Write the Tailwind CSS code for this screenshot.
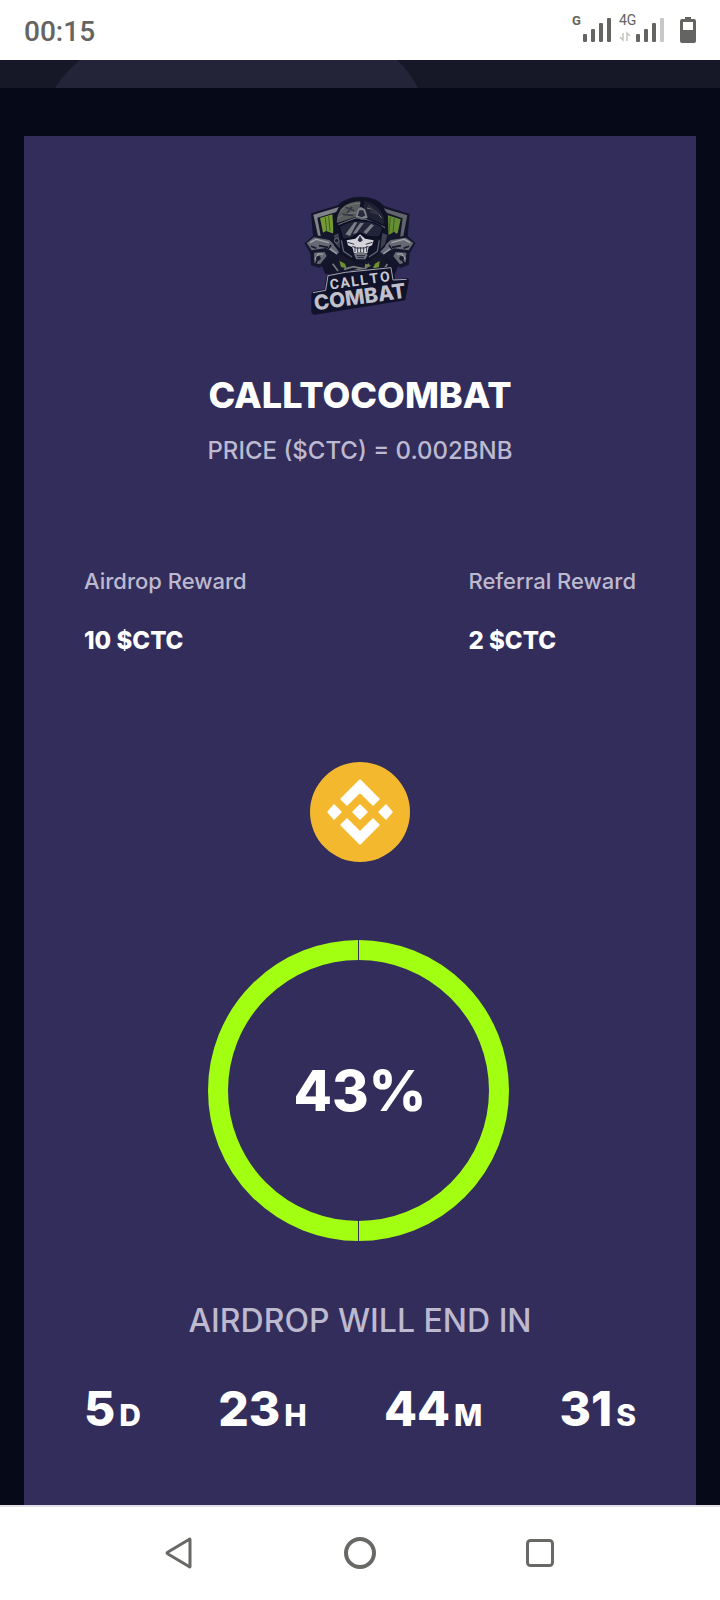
<!DOCTYPE html>
<html lang="en">
<head>
    <meta charset="UTF-8">
    <meta name="viewport" content="width=device-width, initial-scale=1">
    <title>CallToCombat Airdrop</title>
    <script src="https://cdn.jsdelivr.net/npm/@tailwindcss/browser@4"></script>
</head>
<body class="min-h-screen flex flex-col bg-[#060917] font-['Inter',sans-serif] text-white">
    <!-- Status bar -->
    <header class="h-[60px] shrink-0 bg-white text-[#646460] flex items-center justify-between px-6">
        <span class="pt-1 font-['Roboto',sans-serif] text-[28px] font-medium leading-8">00:15</span>
        <svg class="w-[124px] h-10" viewBox="0 -4 124 40" fill="currentColor" aria-hidden="true">
            <g font-family="Roboto, sans-serif">
                <text x="0" y="11" font-size="13" font-weight="700">G</text>
                <text x="47" y="11" font-size="14">4G</text>
            </g>
            <rect x="11" y="20" width="4" height="8" rx="1"/>
            <rect x="19" y="15" width="4" height="13" rx="1"/>
            <rect x="27" y="9" width="4" height="19" rx="1"/>
            <rect x="35" y="4" width="4" height="24" rx="1"/>
            <path d="M51 19v7l-3-3M55 27v-8l3 3" fill="none" stroke="#c4c4c2" stroke-width="1.5"/>
            <rect x="64" y="20" width="4" height="8" rx="1"/>
            <rect x="72" y="15" width="4" height="13" rx="1"/>
            <rect x="80" y="9" width="4" height="19" rx="1"/>
            <rect x="88" y="4" width="4" height="24" rx="1" fill="#c8c8c6"/>
            <path fill-rule="evenodd" d="M113 3h6v2h3q2 0 2 2v20q0 2-2 2h-12q-2 0-2-2V7q0-2 2-2h3zM111 8v8h10V8z"/>
        </svg>
    </header>

    <main class="flex-1 flex flex-col">
        <div class="h-7 bg-[#171827] overflow-hidden">
            <svg class="w-full h-full" viewBox="0 0 720 28" preserveAspectRatio="none" aria-hidden="true">
                <path d="M55 28Q65 12 80 0H397Q410 12 418 28z" fill="#232438"/>
            </svg>
        </div>

        <section class="mx-6 mt-12 flex-1 bg-[#332d5c] px-[60px] pt-12 pb-[68px] flex flex-col items-center">
            <!-- Project logo -->
            <svg class="w-[130px] h-[140px]" viewBox="0 0 390 420" role="img" aria-label="Call to Combat logo">
                <!-- shield -->
                <path d="M48 88L128 64Q150 38 197 38Q244 38 268 66L344 90L336 180L300 270H90L56 178z" fill="#14142b"/>
                <path d="M55 92L132 69L124 84L67 101L79 166L70 160z" fill="#81838a"/>
                <path d="M337 94L266 73L275 86L323 103L315 163L325 155z" fill="#62656c"/>
                <path d="M75 102L112 91L116 149L94 141L84 146z" fill="#739b32"/>
                <path d="M279 94L317 106L308 148L280 154z" fill="#658d31"/>
                <path d="M91 100l4 42M101 97l4 44M286 98l-4 48M298 102l-4 47" stroke="#405c27" stroke-width="3"/>
                <!-- rifles -->
                <path d="M28 178L56 154L80 156L91 142L111 153L119 172L151 196L148 255L128 252L118 224L95 228L75 252L48 244L46 208z" fill="#15172c"/>
                <path d="M362 178L337 155L310 158L298 143L279 154L269 174L239 197L241 255L262 252L271 225L296 229L315 253L342 242L344 207z" fill="#15172c"/>
                <path d="M35 177L57 160L103 168L137 201L125 211L93 192L50 199zM57 206L89 204L95 216L75 241L58 237z" fill="#666873"/>
                <path d="M355 177L333 161L287 168L252 201L264 210L297 193L341 199zM334 206L302 204L295 217L315 241L332 234z" fill="#666873"/>
                <path d="M45 176l18-10 39 10M99 190l27 20M60 226l10-17 14 2M345 176l-18-10-38 10M292 190l-27 20M331 226l-11-17-14 2" fill="none" stroke="#a2a4a9" stroke-width="4"/>
                <path d="M72 185l27 5M318 185l-27 5M62 238l12-20M328 238l-12-20M81 155l17 8M308 156l-15 8M48 187l16 6M342 187l-16 6M108 183l-8 12M282 183l8 12" stroke="#17182c" stroke-width="5"/>
                <circle cx="70" cy="223" r="7" fill="#1a1b30"/><circle cx="320" cy="223" r="7" fill="#1a1b30"/>
                <!-- torso -->
                <path d="M133 214L158 220L182 239H207L233 220L260 216L279 276L242 295H150L122 275z" fill="#171829"/>
                <path d="M133 230l17 9 5 14-17-4zM254 230l-14 9-7 15 19-5zM211 239l18 6-21 9z" fill="#6d9130"/>
                <path d="M147 256l28-8 35 7 12-16M159 265l36-10 33 7M113 239l16 22M277 240l-14 22" fill="none" stroke="#777981" stroke-width="5"/>
                <!-- helmet -->
                <path d="M114 150L121 91Q143 44 198 43Q253 45 274 88L280 152L270 188L247 212L226 231H174L137 211L116 182z" fill="#101226"/>
                <path d="M125 116Q126 62 181 53L196 52L194 77L182 98L133 115z" fill="#5b5d5c"/>
                <path d="M207 51Q258 62 268 107L266 122L216 98L206 79z" fill="#202132"/>
                <path d="M136 82Q157 58 196 58M128 103Q150 86 184 86M216 72q27 4 44 30" fill="none" stroke="#777977" stroke-width="3"/>
                <path d="M151 70l27 10M142 91l33 3M156 88l15-20M219 65l28 22M225 83l28 8" stroke="#353747" stroke-width="5"/>
                <path d="M189 75L198 69L210 76L218 101L200 107L182 99z" fill="#85868d"/>
                <path d="M193 79h12l6 16-11 5-12-5z" fill="#292a3e"/>
                <path d="M130 122L184 101L213 106L270 131" fill="none" stroke="#5f626b" stroke-width="4"/>
                <!-- visor -->
                <path d="M132 127Q164 108 199 110Q241 111 264 133L254 158Q228 163 207 153L195 147L181 155Q158 169 143 164z" fill="#22243a" stroke="#0a0c20" stroke-width="4"/>
                <path d="M151 151L178 115H187L165 156zM173 149L195 117H207L184 148zM205 145L228 120L237 124L214 150z" fill="#7a7b83"/>
                <path d="M116 154L130 148L136 194L122 180zM277 153L262 147L256 195L270 181z" fill="#3f4052"/>
                <circle cx="125" cy="170" r="7" fill="#171930" stroke="#70717b" stroke-width="3"/>
                <path d="M139 169l7 33 25 17M253 169l-6 33-25 17" fill="none" stroke="#5e606d" stroke-width="4"/>
                <!-- skull face -->
                <path d="M155 169L181 164L195 151L210 164L236 169L231 184L221 188L217 208H177L172 190L159 184z" fill="#d5d4da"/>
                <path d="M189 169l6-12 7 12-7 4zM158 175l20 6M232 175l-20 6" fill="#25263a" stroke="#34354a" stroke-width="3"/>
                <path d="M172 187l11 5h25l12-5M180 187v17M188 190v18M197 190v20M206 190v18M215 187v17" fill="none" stroke="#38394c" stroke-width="3"/>
                <path d="M177 211L188 205H205L218 212L211 226H184z" fill="#747680"/>
                <path d="M185 215h25M187 221h20" stroke="#252639" stroke-width="3"/>
                <!-- wordmark -->
                <path d="M91 296L95 279Q98 268 110 269L151 262L282 248Q297 247 298 262L300 287L333 282Q345 282 341 294L331 349L60 392Q50 393 49 382V333Q49 323 59 321L91 315z" fill="#10132a"/>
                <path d="M54 326L92 319L99 275L151 265L288 251L294 288L335 286" fill="none" stroke="#a7a6b3" stroke-width="3"/>
                <g font-weight="700" text-anchor="middle" transform="rotate(-8 195 320)">
                    <g font-family="Roboto, sans-serif" font-size="42" fill="#c9c8d1">
                        <text x="122" y="304">C</text><text x="154" y="304">A</text>
                        <text x="184" y="304">L</text><text x="211" y="304">L</text>
                        <text x="241" y="304">T</text><text x="275" y="304">O</text>
                    </g>
                    <text x="192" y="360" font-family="Inter, sans-serif" font-size="62" font-weight="800" fill="#c0bfcc">COMBAT</text>
                </g>
            </svg>

            <h1 class="mt-[51px] text-[36px] leading-10 font-extrabold">CALLTOCOMBAT</h1>
            <p class="mt-5 text-2xl leading-8 font-medium text-[#bdb9ce]">PRICE ($CTC) = 0.002BNB</p>

            <dl class="mt-[98px] w-full flex justify-between">
                <div>
                    <dt class="text-[22px] leading-8 font-medium text-[#bdb9ce]">Airdrop Reward</dt>
                    <dd class="mt-7 text-2xl leading-8 font-extrabold">10 $CTC</dd>
                </div>
                <div>
                    <dt class="text-[22px] leading-8 font-medium text-[#bdb9ce]">Referral Reward</dt>
                    <dd class="mt-7 text-2xl leading-8 font-extrabold">2 $CTC</dd>
                </div>
            </dl>

            <!-- BNB coin -->
            <svg class="mt-[105px] size-[100px]" viewBox="0 0 100 100" role="img" aria-label="BNB">
                <circle cx="50" cy="50" r="50" fill="#f3b82e"/>
                <path fill="#fff" stroke="#fff" stroke-width="1.5" stroke-linejoin="round" d="M50 18l19 19-6 6-13-13-13 13-6-6zM50 82l19-19-6-6-13 13-13-13-6 6zM50 43l7 7-7 7-7-7zM24 43l7 7-7 7-6-7zM76 43l6 7-6 7-7-7z"/>
            </svg>

            <!-- Progress ring -->
            <div class="mt-[78px] grid place-items-center">
                <svg class="col-start-1 row-start-1 w-[304px] h-[302px]" viewBox="0 0 304 302" aria-hidden="true">
                    <circle cx="150.5" cy="150.5" r="140.5" fill="none" stroke="#a3ff12" stroke-width="20"/>
                    <path d="M150.5 0v20.5M150.5 280.5V302" stroke="#332d5c"/>
                </svg>
                <span class="col-start-1 row-start-1 text-[56px] leading-16 font-extrabold">43%</span>
            </div>

            <h2 class="mt-[59px] text-[32px] leading-10 font-medium text-[#bdb9ce]">AIRDROP WILL END IN</h2>

            <div class="mt-10 w-full flex justify-between text-5xl leading-14 font-extrabold">
                <div class="flex items-baseline gap-1">5<span class="text-3xl">D</span></div>
                <div class="flex items-baseline gap-1">23<span class="text-3xl">H</span></div>
                <div class="flex items-baseline gap-1">44<span class="text-3xl">M</span></div>
                <div class="flex items-baseline gap-1">31<span class="text-3xl">S</span></div>
            </div>
        </section>
    </main>

    <!-- System navigation -->
    <nav class="h-24 shrink-0 bg-white border-t-2 border-[#e4e0ea] px-[12.5%] pb-0.5 grid grid-cols-3 place-items-center text-[#686865]">
        <button type="button" aria-label="Back">
            <svg class="size-8" viewBox="0 0 32 32" fill="none" stroke="currentColor" stroke-width="3" stroke-linejoin="round"><path d="M26 2.5v27q0 1-1 0L4 17q-2-1 0-2L25 2.5q1-1 1 0z"/></svg>
        </button>
        <button type="button" aria-label="Home">
            <svg class="size-8" viewBox="0 0 32 32" fill="none" stroke="currentColor" stroke-width="4"><circle cx="16" cy="16" r="14"/></svg>
        </button>
        <button type="button" aria-label="Recent apps">
            <svg class="size-8" viewBox="0 0 32 32" fill="none" stroke="currentColor" stroke-width="3"><rect x="3.5" y="3.5" width="25" height="25" rx="3"/></svg>
        </button>
    </nav>
</body>
</html>
